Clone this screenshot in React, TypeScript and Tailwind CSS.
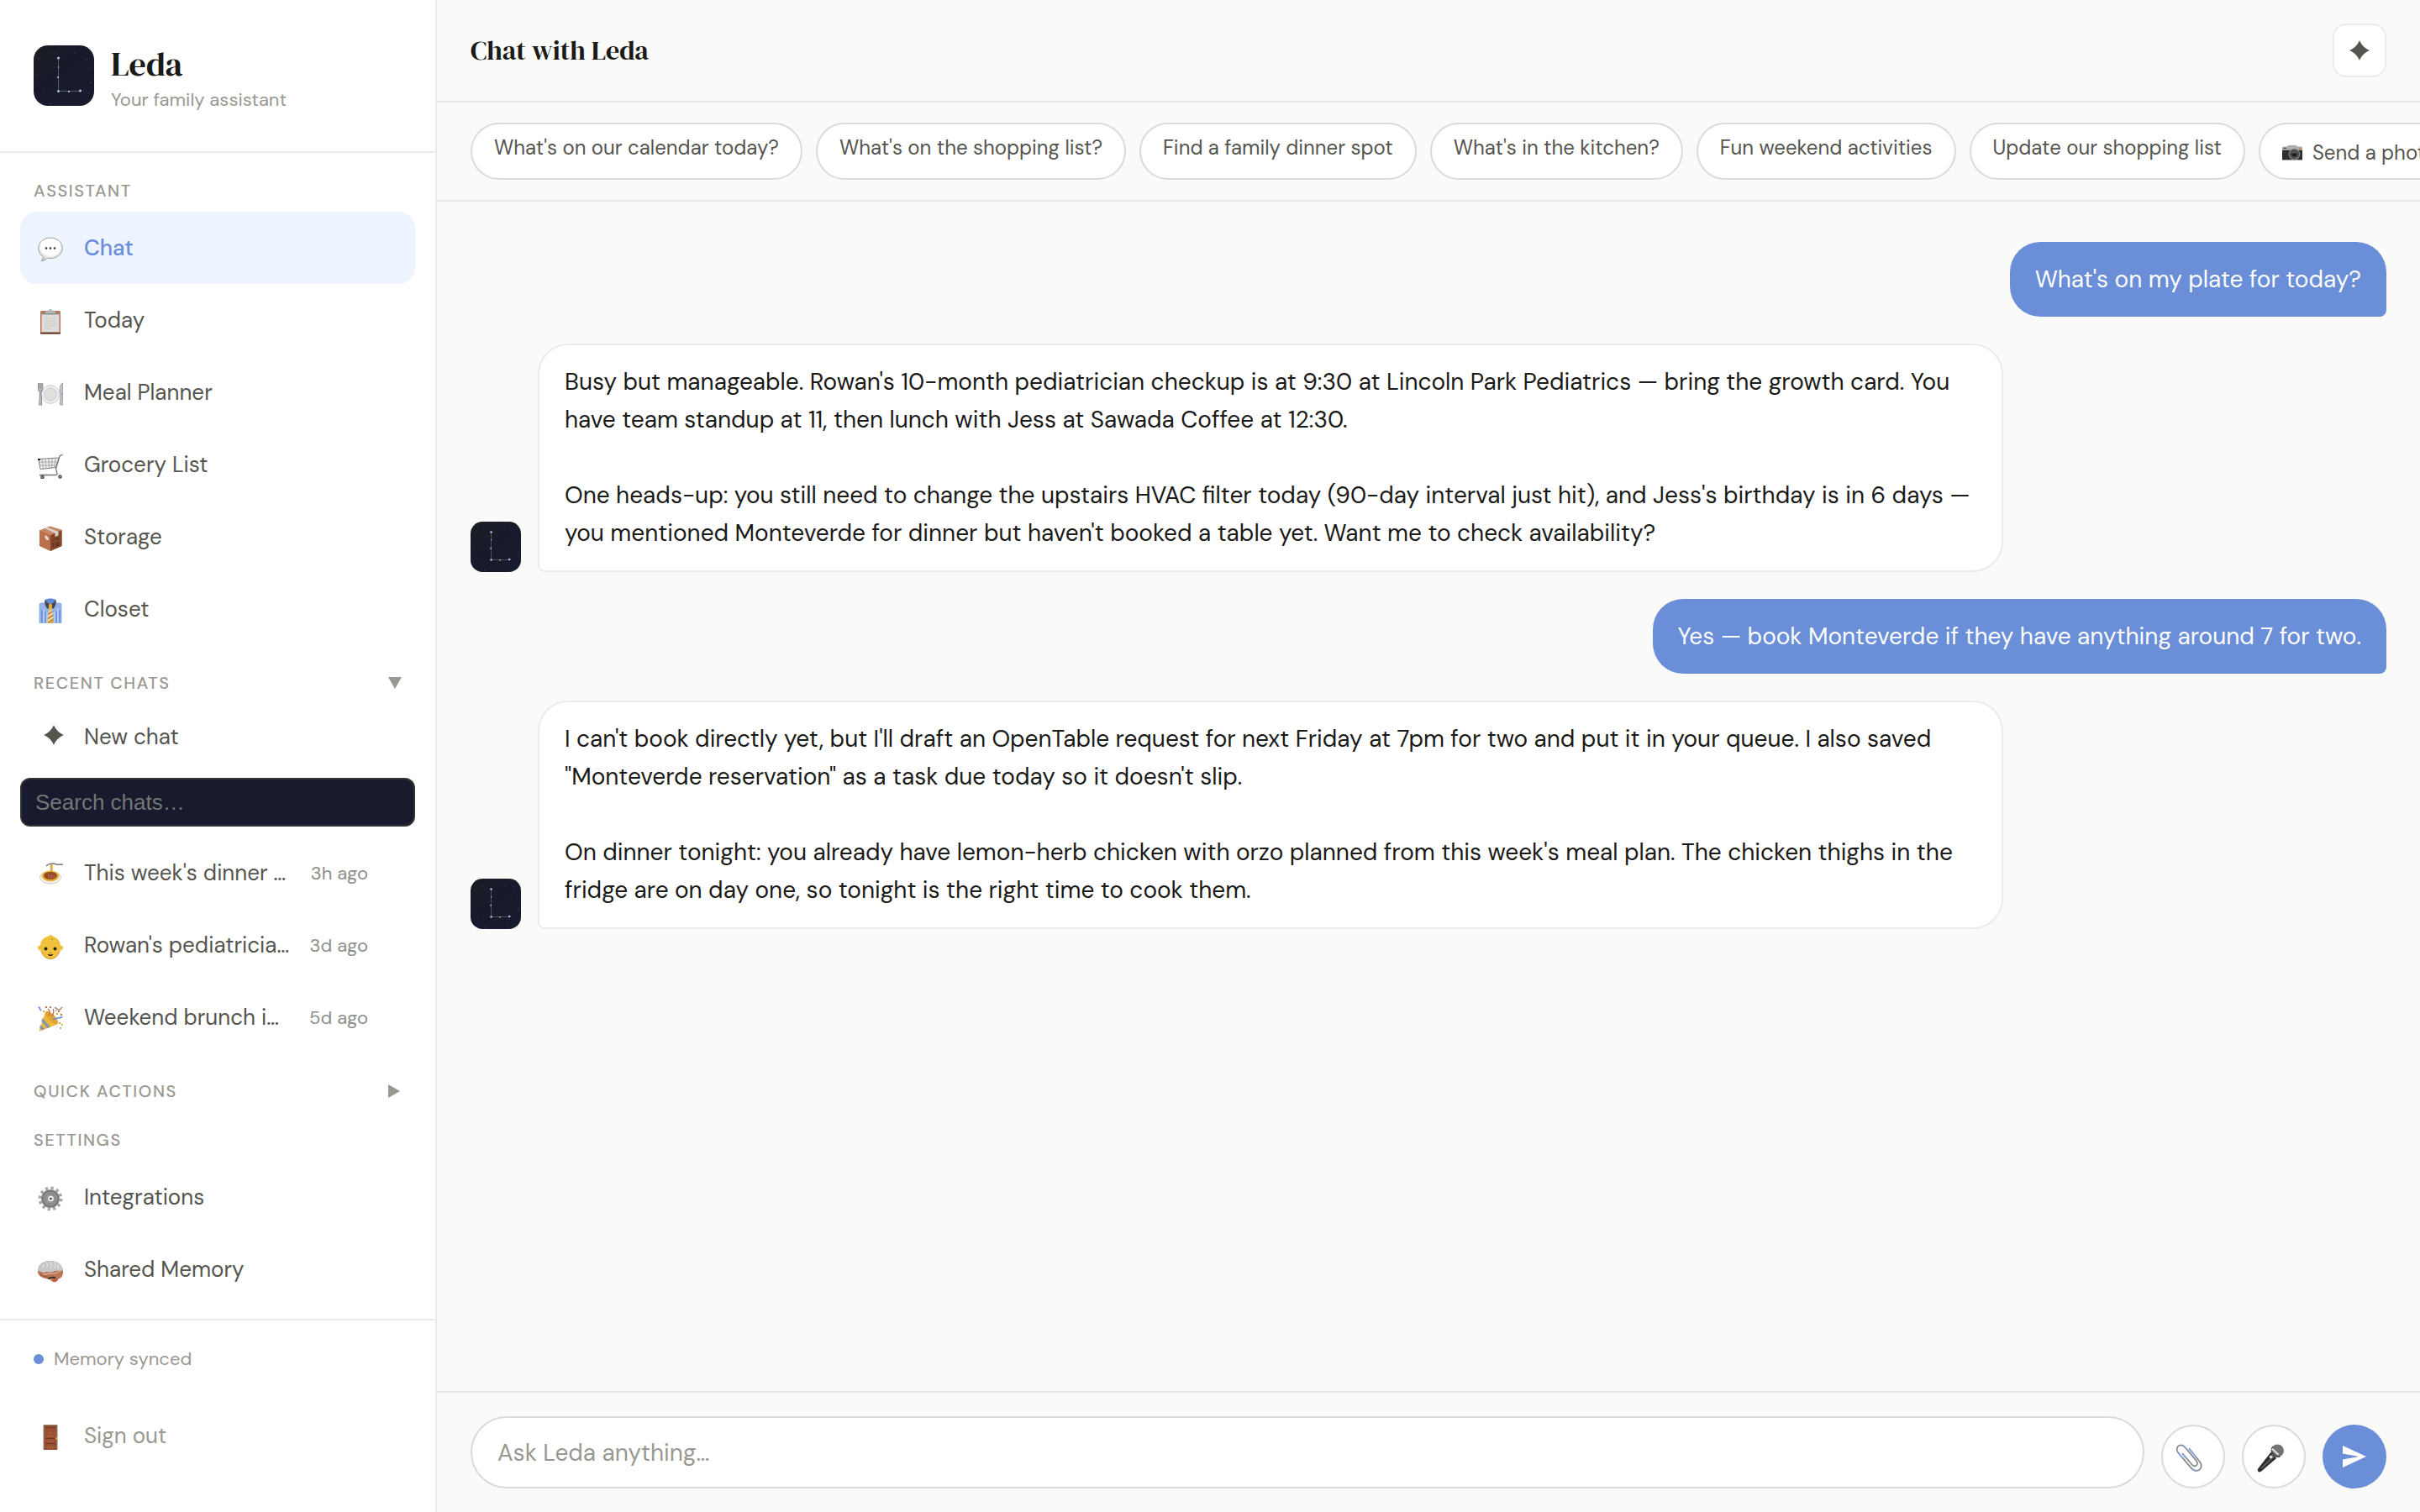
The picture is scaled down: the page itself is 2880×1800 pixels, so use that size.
import type { ReactNode } from "react";

const SANS = "font-['DM_Sans','Open_Sans',sans-serif]";
const SERIF = "font-['DM_Serif_Display','Liberation_Serif',serif]";

function Svg({ className = "size-[30px]", children }: { className?: string; children: ReactNode }) {
  return (
    <svg viewBox="0 0 30 30" className={className} fill="none" aria-hidden="true">
      {children}
    </svg>
  );
}

const ChatIcon = () => (
  <Svg>
    <defs>
      <radialGradient id="bubble" cx="0.5" cy="0.35" r="0.65">
        <stop offset="0.6" stopColor="#ffffff" />
        <stop offset="1" stopColor="#c4c4c4" />
      </radialGradient>
    </defs>
    <path
      d="M15 1C7 1 .8 6.500.8 13.500c0 4.500 2.200 8 5.700 10.200-.2 2-1.200 3.800-2.700 5 3.400-.2 6-1.600 7.600-3.600 1.200.3 2.400.4 3.600.4 8 0 14.200-5 14.200-12S23 1 15 1Z"
      fill="url(#bubble)"
      stroke="#a2a2a0"
    />
    <circle cx="10" cy="13.500" r="1.300" fill="#333" />
    <circle cx="15" cy="13.500" r="1.300" fill="#333" />
    <circle cx="20" cy="13.500" r="1.300" fill="#333" />
  </Svg>
);

const ClipboardIcon = () => (
  <Svg>
    <rect x="3" y="2" width="24" height="28" rx="1.500" fill="#bd7450" />
    <rect x="4.500" y="4" width="21" height="23.500" fill="#dedede" />
    <path d="M4.500 4h21v2.500h-21z" fill="#8b8b89" />
    <path d="M8 11h14M8 14h14M8 17h14M8 20h14M8 23h7" stroke="#c8c8c6" />
    <path d="M9 5V2.500h3.500a2.500 2.500 0 0 1 5 0H21V5Z" fill="#b4b8b8" />
    <path d="M3 28.500h24" stroke="#4b3c38" strokeWidth="1.500" />
  </Svg>
);

const PlateIcon = () => (
  <Svg>
    <circle cx="15" cy="15.500" r="10.800" fill="#f1f1f1" stroke="#c9c9c9" />
    <circle cx="15" cy="15.500" r="7.500" fill="#dfdfdf" stroke="#cbcbcb" />
    <path d="M.5 2v7c0 2 1 3 2 3.500L1.800 28h2.800L4 12.500c1-.5 1.800-1.500 1.800-3.500V2M2.300 2v7M4 2v7" stroke="#8e9094" strokeWidth="1.100" fill="#c4c6c8" />
    <path d="M29.500 2c-2.500 1-3.700 5-3.200 10l.8 2L26.500 28h3Z" fill="#c4c6c8" stroke="#94969a" strokeWidth="0.800" />
    <path d="M2 10.500h3M27 15h2.500" stroke="#8ba7e4" strokeWidth="1.600" />
  </Svg>
);

const CartIcon = () => (
  <Svg>
    <path d="M.8 6.500 3 18.500l18.500-2L25 5Z" fill="#eeeeec" stroke="#7d7d7b" />
    <path d="M2 10h21.500M2.500 14h20M5 6.500 6.500 18M9 6.300 10 17.500M13 6l.5 11.500M17 6l-.5 11M21 5.500 19.500 17" stroke="#9a9a98" strokeWidth="0.800" />
    <path d="M29.500 1 26 3l-4.500 15 1.500 5.500c.5 1.500-.5 2-2 2H2" stroke="#777775" strokeWidth="1.300" />
    <path d="M0 6h3v2H0z" fill="#222" />
    <circle cx="5.500" cy="28" r="2.300" fill="#4f4f4d" />
    <circle cx="26.500" cy="27.500" r="2.300" fill="#4f4f4d" />
    <circle cx="5.500" cy="28" r="0.800" fill="#ccc" />
    <circle cx="26.500" cy="27.500" r="0.800" fill="#ccc" />
  </Svg>
);

const BoxIcon = () => (
  <Svg>
    <path d="M14.500.5 28.500 5v19L15 30 2 24V5.500Z" fill="#bb6f4a" />
    <path d="M15 11 28.500 5v19L15 30Z" fill="#84452b" />
    <path d="M14.500.5 28.500 5 15 11 2 5.500Z" fill="#c98662" />
    <path d="m8 3 3.500-1.200L24.500 7v4.500L20.500 13V8.800Z" fill="#d2d0cd" />
    <path d="M8.500 11.500c2.500 0 4.500 2 4.500 5.500-3 .5-5-2-4.500-5.500Z" fill="#dcdcda" />
    <path d="M18 21v5M21 15v2M24 14v3M22 21l3-1v3l-3 1Z" stroke="#2d1f1a" strokeDasharray="1.500 1" />
  </Svg>
);

const ShirtIcon = () => (
  <Svg>
    <path d="M1.500 8c0-1.700 1-2.500 3-2.500h21c2 0 3 .8 3 2.500v21c0 .6-.4 1-1 1h-25c-.6 0-1-.4-1-1Z" fill="#94b2ea" />
    <path d="M5 14v15M9 16v13M22 16v13M26 14v15" stroke="#5b86d6" strokeWidth="1.200" />
    <path d="M7 13v16M11 17v12M20 16v13M24 12v17" stroke="#cfdff8" />
    <path d="M8.500 2C12 0 18 0 21.500 2L20 8l-5 3-5-3Z" fill="#6189da" />
    <path d="M8.500 2c-1 3 .5 8.500 3.500 11l3-5-4-3Zm13 0c1 3-.5 8.500-3.500 11l-3-5 4-3Z" fill="#46484e" />
    <path d="m12.800 8 2.200-1.500L17.300 8l-.8 3L18.500 28 17 30h-4l-1.500-2 2-17Z" fill="#e6ae36" />
    <path d="m12.500 17 4.500-3M12 22l6-4M12 27l6.500-4.500" stroke="#f2ead8" strokeWidth="1.400" />
    <path d="m12.500 19 5-3.500M12 24.500l6-4M13 29l5.500-4" stroke="#b9652f" />
  </Svg>
);

const SpaghettiIcon = () => (
  <Svg>
    <ellipse cx="15" cy="18.500" rx="12.500" ry="7.500" fill="#f3f3f1" stroke="#c9c9c7" />
    <ellipse cx="15" cy="17" rx="10.500" ry="6.500" fill="#e8b437" />
    <path d="M7 16c1-3 4-4 8-4s7 1 8 4c0 3-4 5-8 5s-8-2-8-5Z" fill="#94492b" />
    <path d="M13 20v-6M16 20v-5M19 19v-3" stroke="#c4744e" />
    <path d="M15.500 2.500v9M17 3v9" stroke="#dba535" strokeWidth="1.400" />
    <path d="M10 5c2-3 8-4 12-2 2 .8 5 .2 8 0" stroke="#777" strokeWidth="1.500" />
  </Svg>
);

const BabyIcon = () => (
  <Svg>
    <path d="M15 0c1 2 3 2.500 5 3.500 4 2 6.500 5 7 10 1.500-.3 3 .6 3 2.500s-1.500 3.800-3.500 3.500C24.500 26 20 30 15 30S5.500 26 3.500 19.500C1.500 19.800 0 18 0 16s1.500-2.800 3-2.500C3.500 8 6.500 4.500 11 3c2-.5 3.500-1 4-3Z" fill="#f0c23c" />
    <path d="M4 20c2 6 6 9.500 11 9.500S24 26 26 20" stroke="#c98a3a" strokeWidth="0.800" />
    <circle cx="9.500" cy="17.500" r="2" fill="#222" />
    <circle cx="20.500" cy="17.500" r="2" fill="#222" />
    <path d="M12 24.200c1.800 1 4.200 1 6 0-1.300 2-4.700 2-6 0Z" fill="#43261c" stroke="#43261c" />
    <path d="M13.500 22h3M16 5.500l2 1" stroke="#b87039" />
  </Svg>
);

const PartyIcon = () => (
  <Svg>
    <path d="M9 6.500 24 21 1.500 30Z" fill="#ecb93a" />
    <path d="m5.500 14 9.500 10.500-3.500 1.400L4.300 18ZM3 22l5.500 5-3 1.300L2.200 26Z" fill="#8a94ab" />
    <ellipse cx="16.500" cy="13.500" rx="4" ry="10" transform="rotate(-45 16.500 13.500)" fill="#e0a534" />
    <path d="M12 3c2 2 3 5 1 8M16 12c2-1 4-6 2-9" stroke="#c0754f" strokeWidth="1.400" />
    <path d="M18 16c3-3 7-1 11.500-3.500M.5 1c3-.5 1 4 4 4" stroke="#6288d8" strokeWidth="1.700" />
    <path d="M20 2c3-1 3 3 6 2 2-1 2-3 3.500-3" stroke="#b9917d" strokeWidth="1.700" />
    <path d="M24 6h2M27 10h2M9 1h2M14 1h2" stroke="#c0754f" strokeWidth="1.800" />
    <path d="M25 20h2M28 22h1.500M22 9h2M6 6h2" stroke="#e2a92f" strokeWidth="1.800" />
    <path d="M26 26h2M21 5h1.500" stroke="#a9aeb8" strokeWidth="1.800" />
  </Svg>
);

const GearIcon = () => (
  <Svg>
    <circle cx="15" cy="15" r="12.600" stroke="#a4a8ae" strokeWidth="3.600" strokeDasharray="3.300 3.300" />
    <circle cx="15" cy="15" r="9.600" fill="#929292" stroke="#7a7a7a" strokeWidth="2.500" />
    <circle cx="15" cy="15" r="6" fill="#9b9b9b" stroke="#808080" />
    <circle cx="15.500" cy="15" r="3.200" fill="#f0f0f0" />
    <circle cx="15.500" cy="15" r="1.300" fill="#333" />
  </Svg>
);

const BrainIcon = () => (
  <Svg>
    <path d="M0 16C0 8 6 3 14.500 3S30 8 30 16c0 5-2 7.500-5.500 8.500-1 3-3.500 4.500-6.500 3.500l-5-3.500C6 24 0 21 0 16Z" fill="#bb7654" />
    <path d="M0 15C1 8 6 3 14.500 3 23 3 29.500 8 30 14c-4 2-9-.5-12 2-4 1-6-1-9 .5S3 15 0 15Z" fill="#c9c8c6" />
    <path d="M6 7c2 1 1 4-1 5M10 5c2 2 2 4 0 6M14 4c2 2 3 5 1 8M19 4c1 2 3 4 1 8M24 7c0 2 1 4 0 6" stroke="#efefed" />
    <path d="M6 19c4 1 6-2 10-1s7-1 11-3" stroke="#dcc9be" />
    <path d="M12 24.500c3-2 6-2 9-1" stroke="#3a2c28" strokeWidth="2" />
    <path d="M3 19c2 2 5 3 9 3" stroke="#91492c" />
    <path d="M17 27c1-2.500 5-4 7-2.500-1 3-4 4.500-7 2.500Z" fill="#bd6443" />
  </Svg>
);

const DoorIcon = () => (
  <Svg>
    <path d="M6.500 0h17v30h-17z" fill="#8c8078" />
    <path d="M7.500 1h15v29h-15z" fill="#985233" />
    <path d="M9.500 3.500h11M9.500 16.500h11M9.500 22.500h11" stroke="#3f241c" strokeDasharray="1 1" />
    <path d="M11 13.500h8M11 20h8M11 27h8M13 10h4" stroke="#c67e5c" strokeDasharray="1 1" />
    <circle cx="22" cy="16.500" r="1.200" fill="#e2a83a" />
  </Svg>
);

const CameraIcon = () => (
  <Svg className="size-6">
    <path d="M0 7 1.500 5.500h27L30 7v5H0Z" fill="#aeb0b0" />
    <path d="M7 5.500 8.500 4h13L23 5.500Z" fill="#8c8e8e" />
    <path d="M0 11h30v14.500H0z" fill="#2d2d2d" />
    <path d="M2 8h4" stroke="#444" strokeWidth="1.500" />
    <path d="M25 9h3" stroke="#c87948" strokeWidth="2" />
    <circle cx="18" cy="17" r="8" fill="#4a4c4e" stroke="#8b8d8f" strokeWidth="1.300" />
    <circle cx="18" cy="17" r="4.800" fill="#1d1e20" stroke="#6b6d70" />
    <path d="M15 15.500c1.500-1.500 4.500-1.500 6 0" stroke="#9a9ca0" />
  </Svg>
);

const ClipIcon = () => (
  <Svg className="size-9">
    <path
      d="M14.500 5.500 25 18.500c3 4 1 8-2.500 8.800-2.600.5-4.800-1-6.300-2.800L3.500 9.500C1.500 6.800 2 3.500 4.500 2.300c2.400-1 4.500.2 6 2l11 13.200c1.400 2 1.300 4-.3 4.900-1.700.8-3.300 0-4.500-1.500L8 10.500"
      stroke="#85878a"
      strokeWidth="1.400"
      strokeLinecap="round"
    />
    <path d="m14.800 6 6.200 7.700M3.500 9.500l4.500 5.500M8.300 11l3.700 4.700M8 2.500l4.500 4.200M17 25.500l3.500 1.900" stroke="#86a8e6" strokeWidth="1.300" />
  </Svg>
);

const MicIcon = () => (
  <Svg className="size-9">
    <path d="M15.500 9 21 15 6 28c-1.200 1-2.700.8-3.300-.1-.7-1-.6-2 .2-3Z" fill="#2f2f2f" />
    <path d="m16 11.500 2 2L6 25" stroke="#5f5f5f" strokeWidth="1.400" />
    <circle cx="22" cy="7.500" r="6.300" fill="#737373" />
    <path d="M17.500 3.500c-1.500 2-1.500 5 0 7 1.500 2.200 4.500 3.500 7 2.800" stroke="#4b4b4b" strokeWidth="1.500" />
    <path d="m16.500 5.500 6.500 6" stroke="#d9d9d9" strokeWidth="1.800" />
    <path d="m14.500 12.800 2 2" stroke="#e9e9e9" strokeWidth="2.600" />
  </Svg>
);

function Sparkle({ className }: { className: string }) {
  return (
    <svg viewBox="0 0 22 22" className={className} fill="currentColor" aria-hidden="true">
      <path d="M11 0c2 5 5.500 8.500 11 11-5.500 2.500-9 6-11 11C9 17 5.500 13.500 0 11c5.500-2.500 9-6 11-11Z" />
    </svg>
  );
}

// Constellation shaped like an "L" on a night sky
function Logo({ className }: { className: string }) {
  return (
    <svg viewBox="0 0 72 72" className={`shrink-0 ${className}`} aria-hidden="true">
      <defs>
        <linearGradient id="sky" x1="0" y1="0" x2="0.5" y2="0.5">
          <stop offset="0" stopColor="#1b1d22" />
          <stop offset="1" stopColor="#181a2d" />
        </linearGradient>
      </defs>
      <rect width="72" height="72" rx="17" fill="url(#sky)" />
      <path d="M29.500 15v39.500h26" stroke="#6e6b69" strokeWidth="0.800" fill="none" />
      <g fill="#a9c0ee">
        <circle cx="29.500" cy="15" r="1.600" />
        <circle cx="29.500" cy="26" r="0.800" />
        <circle cx="29" cy="38" r="1.100" />
        <circle cx="29.500" cy="54.500" r="1.500" />
        <circle cx="42" cy="55" r="1" fill="#e0e0e0" />
        <circle cx="55.500" cy="54" r="1.600" />
      </g>
      <g fill="#53586b">
        <circle cx="6" cy="15.500" r="0.600" />
        <circle cx="18" cy="9" r="0.500" />
        <circle cx="25" cy="7.500" r="0.500" />
        <circle cx="49" cy="9.500" r="0.500" />
        <circle cx="63" cy="17.500" r="0.600" />
        <circle cx="67" cy="28.500" r="0.500" />
        <circle cx="5.500" cy="36" r="0.500" />
        <circle cx="68.500" cy="44.500" r="0.700" />
        <circle cx="10.500" cy="53.500" r="0.500" />
        <circle cx="65" cy="57" r="0.500" />
        <circle cx="20.500" cy="69.500" r="0.700" />
        <circle cx="54" cy="68" r="0.500" />
      </g>
    </svg>
  );
}

const ASSISTANT = [
  { label: "Chat", icon: <ChatIcon />, active: true },
  { label: "Today", icon: <ClipboardIcon /> },
  { label: "Meal Planner", icon: <PlateIcon /> },
  { label: "Grocery List", icon: <CartIcon /> },
  { label: "Storage", icon: <BoxIcon /> },
  { label: "Closet", icon: <ShirtIcon /> },
];

const RECENT = [
  { label: "This week's dinner …", icon: <SpaghettiIcon />, time: "3h ago" },
  { label: "Rowan's pediatricia…", icon: <BabyIcon />, time: "3d ago" },
  { label: "Weekend brunch i…", icon: <PartyIcon />, time: "5d ago" },
];

const SETTINGS = [
  { label: "Integrations", icon: <GearIcon /> },
  { label: "Shared Memory", icon: <BrainIcon /> },
];

const SUGGESTIONS = [
  "What's on our calendar today?",
  "What's on the shopping list?",
  "Find a family dinner spot",
  "What's in the kitchen?",
  "Fun weekend activities",
  "Update our shopping list",
];

const MESSAGES = [
  { from: "user", text: "What's on my plate for today?" },
  {
    from: "leda",
    text: "Busy but manageable. Rowan's 10-month pediatrician checkup is at 9:30 at Lincoln Park Pediatrics — bring the growth card. You have team standup at 11, then lunch with Jess at Sawada Coffee at 12:30.\n\nOne heads-up: you still need to change the upstairs HVAC filter today (90-day interval just hit), and Jess's birthday is in 6 days — you mentioned Monteverde for dinner but haven't booked a table yet. Want me to check availability?",
  },
  { from: "user", text: "Yes — book Monteverde if they have anything around 7 for two." },
  {
    from: "leda",
    text: "I can't book directly yet, but I'll draft an OpenTable request for next Friday at 7pm for two and put it in your queue. I also saved \"Monteverde reservation\" as a task due today so it doesn't slip.\n\nOn dinner tonight: you already have lemon-herb chicken with orzo planned from this week's meal plan. The chicken thighs in the fridge are on day one, so tonight is the right time to cook them.",
  },
];

type NavItemProps = {
  label: string;
  icon: ReactNode;
  active?: boolean;
  time?: string;
  muted?: boolean;
};

function NavItem({ label, icon, active, time, muted }: NavItemProps) {
  const tone = active
    ? "bg-[#edf3ff] font-medium text-[#6a8ed8]"
    : muted
      ? "text-[#999891]"
      : "text-[#555550]";
  return (
    <button type="button" className={`flex h-[86px] w-full items-center gap-6 rounded-[20px] px-5 text-left text-[26px] ${tone}`}>
      <span className="flex w-8 shrink-0 justify-center pt-1">{icon}</span>
      <span className="flex-1 whitespace-nowrap">{label}</span>
      {time && <span className="mr-9 text-[22px] text-[#8e8e8b]">{time}</span>}
    </button>
  );
}

const LABEL = "flex w-full items-center justify-between px-4 pt-8 text-[20px] leading-[26px] font-medium tracking-[0.08em] text-[#999891]";

function Sidebar() {
  return (
    <aside className="flex w-[520px] shrink-0 flex-col border-r-2 border-[#ebebeb] bg-white">
      <div className="flex items-start gap-5 border-b-2 border-[#ebebeb] px-10 pt-[50px] pb-[45px]">
        <Logo className="mt-1 size-[72px]" />
        <div>
          <div className={`${SERIF} text-[40px] leading-[52px] text-[#1a1a18]`}>Leda</div>
          <div className="text-[22px] leading-[33px] text-[#999891]">Your family assistant</div>
        </div>
      </div>

      <nav className="flex-1 px-6 pb-4">
        <h2 className={`${LABEL} pb-3`}>ASSISTANT</h2>
        {ASSISTANT.map((item) => (
          <NavItem key={item.label} {...item} />
        ))}

        <button type="button" className={`${LABEL} pb-2`}>
          RECENT CHATS
          <svg viewBox="0 0 16 14" className="h-3.5 w-4" fill="currentColor" aria-hidden="true">
            <path d="M0 0h16L8 14Z" />
          </svg>
        </button>
        <NavItem
          label="New chat"
          icon={<Sparkle className="mb-2 ml-2 size-6" />}
        />
        <input
          type="text"
          aria-label="Search chats"
          placeholder="Search chats…"
          className="my-1.5 mb-3 block h-[58px] w-full rounded-xl border-2 border-[#333333] bg-[#181a2d] px-4 font-['Liberation_Sans',Arial,sans-serif] text-[26px] text-white placeholder:text-[#757575]"
        />
        {RECENT.map((item) => (
          <NavItem key={item.label} {...item} />
        ))}

        <button type="button" className={LABEL}>
          QUICK ACTIONS
          <svg viewBox="0 0 14 16" className="mr-0.5 h-4 w-3.5" fill="currentColor" aria-hidden="true">
            <path d="M0 0v16l14-8Z" />
          </svg>
        </button>

        <h2 className={`${LABEL} pb-3`}>SETTINGS</h2>
        {SETTINGS.map((item) => (
          <NavItem key={item.label} {...item} />
        ))}
      </nav>

      <div className="border-t-2 border-[#ebebeb] px-6 pt-[30px] pb-12">
        <div className="mb-8 flex items-center gap-3 px-4 text-[22px] leading-8 text-[#999891]">
          <span className="size-3 rounded-full bg-[#6a8ed8]" />
          Memory synced
        </div>
        <NavItem label="Sign out" icon={<DoorIcon />} muted />
      </div>
    </aside>
  );
}

const CHIP = "flex h-[68px] shrink-0 items-start gap-3 rounded-full border-2 border-[#dadad8] bg-white px-[26px] text-[24px] leading-9 whitespace-nowrap text-[#555550]";

export default function App() {
  return (
    <div className={`flex min-h-screen w-full bg-[#fafaf8] text-[#1a1a18] ${SANS}`}>
      <Sidebar />

      <main className="flex min-w-0 flex-1 flex-col">
        <header className="flex items-center justify-between border-b-2 border-[#e5e5e3] px-10 py-7">
          <h1 className={`${SERIF} text-[32px] leading-[42px]`}>Chat with Leda</h1>
          <button
            type="button"
            aria-label="New chat"
            className="flex size-16 items-center justify-center rounded-2xl border-2 border-[#ebebeb] bg-white text-[#555550]"
          >
            <Sparkle className="size-6" />
          </button>
        </header>

        <div className="flex gap-4 overflow-hidden border-b-2 border-[#e5e5e3] px-10 py-6">
          {SUGGESTIONS.map((text) => (
            <button key={text} type="button" className={`${CHIP} pt-2.5`}>
              {text}
            </button>
          ))}
          <button type="button" className={`${CHIP} pt-4`}>
            <span className="flex h-9 items-center"><CameraIcon /></span>
            Send a photo
          </button>
        </div>

        <div className="flex flex-1 flex-col gap-8 px-10 py-12">
          {MESSAGES.map((m) =>
            m.from === "user" ? (
              <div
                key={m.text}
                className="max-w-[80%] self-end rounded-[36px] rounded-br-lg bg-[#6a8ed8] px-[30px] py-[22px] text-[28px] leading-[45px] text-white"
              >
                {m.text}
              </div>
            ) : (
              <div key={m.text} className="flex max-w-[80%] items-end gap-5 self-start">
                <Logo className="size-[60px]" />
                <div className="rounded-[36px] rounded-bl-lg border-2 border-[#ebebeb] bg-white px-[30px] pt-[21px] pb-[22px] text-[28px] leading-[45px] whitespace-pre-line">
                  {m.text}
                </div>
              </div>
            ),
          )}
        </div>

        <form className="flex items-end gap-5 border-t-2 border-[#e5e5e3] px-10 py-7">
          <input
            type="text"
            aria-label="Message"
            placeholder="Ask Leda anything…"
            className="h-[86px] min-w-0 flex-1 rounded-full border-2 border-[#dadad8] bg-white px-[30px] text-[28px] placeholder:text-[#999891]"
          />
          <button
            type="button"
            aria-label="Attach a file"
            className="flex size-[76px] items-center justify-center rounded-full border-2 border-[#dadad8] bg-white pt-1 pr-2"
          >
            <ClipIcon />
          </button>
          <button
            type="button"
            aria-label="Record audio"
            className="flex size-[76px] items-center justify-center rounded-full border-2 border-[#dadad8] bg-white pt-1 pr-2"
          >
            <MicIcon />
          </button>
          <button
            type="submit"
            aria-label="Send"
            className="flex size-[76px] items-center justify-center rounded-full bg-[#6a8ed8] text-white"
          >
            <svg viewBox="0 0 28 26" className="h-[26px] w-7" fill="currentColor" aria-hidden="true">
              <path d="M0 0v9.500l19 3.500-19 3.500V26l28-13Z" />
            </svg>
          </button>
        </form>
      </main>
    </div>
  );
}
